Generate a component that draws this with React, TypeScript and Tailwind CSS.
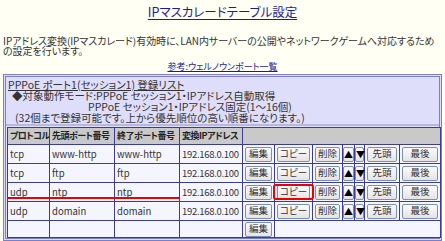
const rows = [
  { proto: "tcp", start: "www-http", end: "www-http", ip: "192.168.0.100" },
  { proto: "tcp", start: "ftp", end: "ftp", ip: "192.168.0.100" },
  { proto: "udp", start: "ntp", end: "ntp", ip: "192.168.0.100", mark: true },
  { proto: "udp", start: "domain", end: "domain", ip: "192.168.0.100" },
];

const font = "[font-family:'Noto_Sans_CJK_JP',sans-serif] [font-feature-settings:'palt']";

function Btn({ children, arrow }: { children: React.ReactNode; arrow?: boolean }) {
  return (
    <button
      className={`block h-[15px] w-full whitespace-nowrap rounded-[2px] border border-[#7a8fb8] bg-gradient-to-b from-[#fbfbfb] to-[#e4e4e4] leading-none ${
        arrow ? "px-0 text-[9px] text-black" : "px-0 text-[9.5px] text-[#333]"
      }`}
    >
      {children}
    </button>
  );
}

const cell = "border border-[#3b3b98] px-[2px] text-left align-middle whitespace-nowrap overflow-hidden";
const bcell = "border border-[#3b3b98] px-[2px] align-middle";
const acell = "border border-[#3b3b98] px-0 align-middle";

export default function App() {
  return (
    <div className={`h-[241px] w-[445px] overflow-hidden bg-[#fffff3] text-[#333] ${font}`}>
      <div className="pt-[4px] text-center text-[12.5px] leading-[16px]">
        <a className="text-[#1a1aa6] underline underline-offset-2">IPマスカレードテーブル設定</a>
      </div>
      <p className="mt-[16px] px-[3px] text-[10px] leading-[10px] tracking-[-0.05px]">
        IPアドレス変換(IPマスカレード)有効時に、LAN内サーバーの公開やネットワークゲームへ対応するための設定を行います。
      </p>
      <div className="mt-[5px] text-center text-[9px] leading-[11px]">
        <a className="text-[#1a1aa6] underline">参考:ウェルノウンポート一覧</a>
      </div>

      <div className="mx-[3px] mt-[2px] border-[3px] border-double border-[#7d7dc4] bg-[#dedefb]">
        <p className="px-[2px] pt-[2px] pb-[1px] text-[10.5px] leading-[11px] whitespace-nowrap">
          <span className="underline">PPPoE ポート1(セッション1) 登録リスト</span>
          <br />
          <span className="ml-[4px]">◆対象動作モード:PPPoE セッション1・IPアドレス自動取得</span>
          <br />
          <span className="ml-[80px]">PPPoE セッション1・IPアドレス固定(1～16個)</span>
          <br />
          <span className="ml-[7px]">(32個まで登録可能です。上から優先順位の高い順番になります。)</span>
        </p>
        <div className="border-t-[2px] border-[#b7b7e6] pl-[1px] pr-[2px] pt-[1px]">
          <table className="w-[433px] table-fixed border-collapse bg-[#f5f5ff] text-[9.5px] leading-[10px]">
            <colgroup>
              <col className="w-[42px]" />
              <col className="w-[65px]" />
              <col className="w-[65px]" />
              <col className="w-[63px]" />
              <col className="w-[32px]" />
              <col className="w-[38px]" />
              <col className="w-[30px]" />
              <col className="w-[12px]" />
              <col className="w-[10px]" />
              <col className="w-[35px]" />
              <col className="w-[41px]" />
            </colgroup>
            <thead>
              <tr className="h-[17px] bg-[#c9c9c9] bg-[radial-gradient(#b4b4b4_0.6px,transparent_0.6px)] bg-[length:2px_2px] text-[9px] font-bold text-[#222]">
                <th className={`${cell} px-[1px] tracking-[-0.6px]`}>プロトコル</th>
                <th className={`${cell} px-[1px] tracking-[-0.5px]`}>先頭ポート番号</th>
                <th className={`${cell} px-[1px] tracking-[-0.5px]`}>終了ポート番号</th>
                <th className={`${cell} px-[1px] tracking-[-0.5px]`}>変換IPアドレス</th>
                <th className={cell} colSpan={7}></th>
              </tr>
            </thead>
            <tbody>
              {rows.map((r, i) => (
                <tr key={i} className="h-[19px]">
                  <td className={`${cell} ${r.mark ? "relative overflow-visible" : ""}`}>
                    {r.proto}
                    {r.mark && <div className="absolute left-0 bottom-[2px] h-[2px] w-[172px] bg-[#ee0000]" />}
                  </td>
                  <td className={cell}>{r.start}</td>
                  <td className={cell}>{r.end}</td>
                  <td className={`${cell} tracking-[-0.3px]`}>{r.ip}</td>
                  <td className={bcell}><Btn>編集</Btn></td>
                  <td className={`${bcell} ${r.mark ? "relative" : ""}`}>
                    <Btn>コピー</Btn>
                    {r.mark && (
                      <div className="absolute -left-[2px] -right-[2px] top-[1px] bottom-[1px] rounded-[3px] border-2 border-[#ee0000]" />
                    )}
                  </td>
                  <td className={bcell}><Btn>削除</Btn></td>
                  <td className={acell}><Btn arrow>▲</Btn></td>
                  <td className={acell}><Btn arrow>▼</Btn></td>
                  <td className={bcell}><Btn>先頭</Btn></td>
                  <td className={bcell}><Btn>最後</Btn></td>
                </tr>
              ))}
              <tr className="h-[17px]">
                <td className={cell}></td>
                <td className={cell}></td>
                <td className={cell}></td>
                <td className={cell}></td>
                <td className={bcell}><Btn>編集</Btn></td>
                <td className={cell} colSpan={6}></td>
              </tr>
            </tbody>
          </table>
        </div>
      </div>
    </div>
  );
}
